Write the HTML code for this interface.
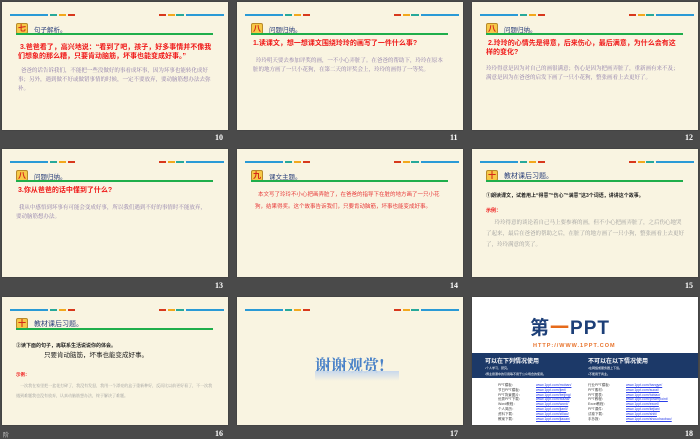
<!DOCTYPE html>
<html><head><meta charset="utf-8"><style>
*{margin:0;padding:0;box-sizing:border-box}
body{width:700px;height:438px;background:#4a4a4a;position:relative;overflow:hidden;font-family:"Liberation Sans","Noto Sans CJK SC",sans-serif}
.s{position:absolute;width:226px;height:128px;background:#f9f4e1;overflow:hidden;box-shadow:0 0 1px #333}
.n{position:absolute;color:#fff;font:bold 8px "Liberation Serif",serif}
.l{position:absolute;height:1.5px;top:12px}
.b{position:absolute;left:14px;top:21px;width:12px;height:11px;background:#f7c948;border:1px solid #b88a2a;border-radius:2px;color:#d42a1a;font-size:8px;font-weight:bold;line-height:9px;text-align:center}
.t{position:absolute;left:32px;top:22px;font-size:6.5px;color:#2a3f7a}
.g{position:absolute;left:14px;top:31px;width:197px;height:1.5px;background:#1fae4b}
.q{position:absolute;left:16px;color:#f01818;font-weight:bold;font-size:7px;line-height:8.5px;width:195px}
.p{position:absolute;left:16px;color:#8a78a8;font-family:"Noto Serif CJK SC",serif;font-size:5.5px;line-height:9px;width:195px}
</style></head><body>

<!-- template lines function via repeated markup -->
<div class="s" style="left:2px;top:2px">
<div class="l" style="left:8px;width:38px;background:#2a9ad6"></div><div class="l" style="left:48px;width:7px;background:#26a89a"></div><div class="l" style="left:57px;width:7px;background:#f2a81d"></div><div class="l" style="left:66px;width:7px;background:#d8381c"></div>
<div class="l" style="left:157px;width:7px;background:#d8381c"></div><div class="l" style="left:166px;width:7px;background:#f2a81d"></div><div class="l" style="left:174px;width:8px;background:#26a89a"></div><div class="l" style="left:184px;width:38px;background:#2a9ad6"></div>
<div class="b">七</div><div class="t">句子解析。</div><div class="g"></div>
<div class="q" style="top:42px;">&nbsp;3.爸爸看了，高兴地说：“看到了吧，孩子，好多事情并不像我们想象的那么糟，只要肯动脑筋，坏事也能变成好事。”</div>
<div class="p" style="top:64px">&nbsp;&nbsp;爸爸的话告诉我们，不能把一些没做好的事看成坏事，因为坏事也能转化成好事；另外，遇到做不好或做错事情的时候，一定不要放弃，要动脑筋想办法去弥补。</div>
</div>
<div class="n" style="left:215px;top:133px">10</div>

<div class="s" style="left:237px;top:2px">
<div class="l" style="left:8px;width:38px;background:#2a9ad6"></div><div class="l" style="left:48px;width:7px;background:#26a89a"></div><div class="l" style="left:57px;width:7px;background:#f2a81d"></div><div class="l" style="left:66px;width:7px;background:#d8381c"></div>
<div class="l" style="left:157px;width:7px;background:#d8381c"></div><div class="l" style="left:166px;width:7px;background:#f2a81d"></div><div class="l" style="left:174px;width:8px;background:#26a89a"></div><div class="l" style="left:184px;width:38px;background:#2a9ad6"></div>
<div class="b">八</div><div class="t">问题归纳。</div><div class="g"></div>
<div class="q" style="top:38px">1.读课文，想一想课文围绕玲玲的画写了一件什么事?</div>
<div class="p" style="top:54px">&nbsp;&nbsp;玲玲明天要去参加评奖的画，一不小心弄脏了。在爸爸的帮助下，玲玲在原本脏的地方画了一只小花狗，在第二天的评奖会上，玲玲的画得了一等奖。</div>
</div>
<div class="n" style="left:450px;top:133px">11</div>

<div class="s" style="left:472px;top:2px">
<div class="l" style="left:8px;width:38px;background:#2a9ad6"></div><div class="l" style="left:48px;width:7px;background:#26a89a"></div><div class="l" style="left:57px;width:7px;background:#f2a81d"></div><div class="l" style="left:66px;width:7px;background:#d8381c"></div>
<div class="l" style="left:157px;width:7px;background:#d8381c"></div><div class="l" style="left:166px;width:7px;background:#f2a81d"></div><div class="l" style="left:174px;width:8px;background:#26a89a"></div><div class="l" style="left:184px;width:38px;background:#2a9ad6"></div>
<div class="b">八</div><div class="t">问题归纳。</div><div class="g"></div>
<div class="q" style="top:38px;left:14px">&nbsp;2.玲玲的心情先是得意，后来伤心，最后满意，为什么会有这样的变化?</div>
<div class="p" style="top:62px;left:14px">玲玲得意是因为对自己的画很满意；伤心是因为把画弄脏了，重新画有来不及；满意是因为在爸爸的启发下画了一只小花狗，整张画看上去更好了。</div>
</div>
<div class="n" style="left:685px;top:133px">12</div>

<div class="s" style="left:2px;top:149px">
<div class="l" style="left:8px;width:38px;background:#2a9ad6"></div><div class="l" style="left:48px;width:7px;background:#26a89a"></div><div class="l" style="left:57px;width:7px;background:#f2a81d"></div><div class="l" style="left:66px;width:7px;background:#d8381c"></div>
<div class="l" style="left:157px;width:7px;background:#d8381c"></div><div class="l" style="left:166px;width:7px;background:#f2a81d"></div><div class="l" style="left:174px;width:8px;background:#26a89a"></div><div class="l" style="left:184px;width:38px;background:#2a9ad6"></div>
<div class="b">八</div><div class="t">问题归纳。</div><div class="g"></div>
<div class="q" style="top:38px">3.你从爸爸的话中懂到了什么?</div>
<div class="p" style="top:54px;left:14px">&nbsp;&nbsp;我从中感悟到坏事有可能会变成好事，所以我们遇到不好的事情时不能放弃，要动脑筋想办法。</div>
</div>
<div class="n" style="left:215px;top:281px">13</div>

<div class="s" style="left:237px;top:149px">
<div class="l" style="left:8px;width:38px;background:#2a9ad6"></div><div class="l" style="left:48px;width:7px;background:#26a89a"></div><div class="l" style="left:57px;width:7px;background:#f2a81d"></div><div class="l" style="left:66px;width:7px;background:#d8381c"></div>
<div class="l" style="left:157px;width:7px;background:#d8381c"></div><div class="l" style="left:166px;width:7px;background:#f2a81d"></div><div class="l" style="left:174px;width:8px;background:#26a89a"></div><div class="l" style="left:184px;width:38px;background:#2a9ad6"></div>
<div class="b">九</div><div class="t">课文主题。</div><div class="g"></div>
<div class="p" style="top:40px;left:18px;color:#e83a3a;font-family:'Liberation Sans','Noto Sans CJK SC',sans-serif;line-height:12px;width:192px">&nbsp;&nbsp;本文写了玲玲不小心把画弄脏了，在爸爸的指导下在脏的地方画了一只小花狗，结果得奖。这个故事告诉我们，只要肯动脑筋，坏事也能变成好事。</div>
</div>
<div class="n" style="left:450px;top:281px">14</div>

<div class="s" style="left:472px;top:149px">
<div class="l" style="left:8px;width:38px;background:#2a9ad6"></div><div class="l" style="left:48px;width:7px;background:#26a89a"></div><div class="l" style="left:57px;width:7px;background:#f2a81d"></div><div class="l" style="left:66px;width:7px;background:#d8381c"></div>
<div class="l" style="left:157px;width:7px;background:#d8381c"></div><div class="l" style="left:166px;width:7px;background:#f2a81d"></div><div class="l" style="left:174px;width:8px;background:#26a89a"></div><div class="l" style="left:184px;width:38px;background:#2a9ad6"></div>
<div class="b">十</div><div class="t" style="font-size:7px">教材课后习题。</div><div class="g"></div>
<div class="q" style="top:43px;left:14px;color:#222;font-size:5px">①朗读课文，试着用上“得意”“伤心”“满意”这3个词语，讲讲这个故事。</div>
<div class="q" style="top:58px;left:14px;font-size:5px">示例：</div>
<div class="p" style="top:68px;left:14px;color:#999;line-height:11px;width:200px">&nbsp;&nbsp;&nbsp;&nbsp;&nbsp;&nbsp;玲玲得意的谈论着自己马上要参赛的画，但不小心把画弄脏了，之后伤心地哭了起来，最后在爸爸的帮助之后，在脏了的地方画了一只小狗，整张画看上去更好了，玲玲满意的笑了。</div>
</div>
<div class="n" style="left:685px;top:281px">15</div>

<div class="s" style="left:2px;top:297px">
<div class="l" style="left:8px;width:38px;background:#2a9ad6"></div><div class="l" style="left:48px;width:7px;background:#26a89a"></div><div class="l" style="left:57px;width:7px;background:#f2a81d"></div><div class="l" style="left:66px;width:7px;background:#d8381c"></div>
<div class="l" style="left:157px;width:7px;background:#d8381c"></div><div class="l" style="left:166px;width:7px;background:#f2a81d"></div><div class="l" style="left:174px;width:8px;background:#26a89a"></div><div class="l" style="left:184px;width:38px;background:#2a9ad6"></div>
<div class="b">十</div><div class="t" style="font-size:7px">教材课后习题。</div><div class="g"></div>
<div class="q" style="top:45px;left:14px;color:#222;font-size:5px">②读下面的句子，再联系生活说说你的体会。</div>
<div class="q" style="top:55px;left:42px;color:#222;font-weight:normal;font-size:6.5px">只要肯动脑筋，坏事也能变成好事。</div>
<div class="q" style="top:74px;left:14px;font-size:4.5px">示例：</div>
<div class="p" style="top:84px;left:14px;color:#999;font-size:4px;line-height:10px;width:200px">&nbsp;&nbsp;&nbsp;&nbsp;一次我在家里把一盆花打碎了，我没有发怒，我用一个漂亮的盒子重新种好，反而比以前更好看了，不一次我遇到难题我也没有放弃，认真动脑筋想办法，终于解决了难题。</div>
</div>
<div class="n" style="left:215px;top:429px">16</div>
<div class="n" style="left:3px;top:430px;font-weight:normal;color:#ccc;font-size:6px">阶</div>

<div class="s" style="left:237px;top:297px">
<div class="l" style="left:8px;width:38px;background:#2a9ad6"></div><div class="l" style="left:48px;width:7px;background:#26a89a"></div><div class="l" style="left:57px;width:7px;background:#f2a81d"></div><div class="l" style="left:66px;width:7px;background:#d8381c"></div>
<div class="l" style="left:157px;width:7px;background:#d8381c"></div><div class="l" style="left:166px;width:7px;background:#f2a81d"></div><div class="l" style="left:174px;width:8px;background:#26a89a"></div><div class="l" style="left:184px;width:38px;background:#2a9ad6"></div>
<div style="position:absolute;left:78px;top:56px;font-size:16px;font-weight:bold;color:#4a82c8;font-family:'Noto Serif CJK SC',serif;letter-spacing:0">谢谢观赏!</div>
<div style="position:absolute;left:78px;top:74px;width:84px;height:10px;background:linear-gradient(#c8d8ec,rgba(249,244,225,0))"></div>
</div>
<div class="n" style="left:450px;top:429px">17</div>

<div class="s" style="left:472px;top:297px;background:#fff">
<div style="position:absolute;left:58px;top:22px;font-size:19px;font-weight:bold;color:#1d3f78;letter-spacing:1px;line-height:20px">第<span style="color:#e66a1a">一</span>PPT</div>
<div style="position:absolute;left:61px;top:46px;font-size:5.5px;color:#e8722a;letter-spacing:1px;font-weight:bold">HTTP://WWW.1PPT.COM</div>
<div style="position:absolute;left:0;top:56px;width:226px;height:25px;background:#1c3968;color:#fff">
<div style="position:absolute;left:13px;top:3px;font-size:6px;font-weight:bold">可以在下列情况使用</div>
<div style="position:absolute;left:116px;top:3px;font-size:6px;font-weight:bold">不可以在以下情况使用</div>
<div style="position:absolute;left:13px;top:12px;font-size:3px;line-height:6px">•个人学习、研究。<br>•博主授课中的引用等不用于公众场合的使用。</div>
<div style="position:absolute;left:116px;top:12px;font-size:3px;line-height:6px">•在网络或服务器上下载。<br>•不能用于商业。</div>
</div>
<div style="position:absolute;left:26px;top:86px;font-size:3.5px;line-height:4.8px;color:#444">PPT模板：<br>节日PPT模板：<br>PPT背景图片：<br>优秀PPT下载：<br>Word教程：<br>个人简历：<br>资料下载：<br>教案下载：</div>
<div style="position:absolute;left:64px;top:86px;font-size:3.5px;line-height:4.8px;color:#2a3ee8;text-decoration:underline">www.1ppt.com/moban/<br>www.1ppt.com/jieri/<br>www.1ppt.com/beijing/<br>www.1ppt.com/xiazai/<br>www.1ppt.com/word/<br>www.1ppt.com/jianli/<br>www.1ppt.com/ziliao/<br>www.1ppt.com/jiaoan/</div>
<div style="position:absolute;left:116px;top:86px;font-size:3.5px;line-height:4.8px;color:#444">行业PPT模板：<br>PPT素材：<br>PPT图表：<br>PPT教程：<br>Excel教程：<br>PPT课件：<br>试卷下载：<br>手抄报：</div>
<div style="position:absolute;left:154px;top:86px;font-size:3.5px;line-height:4.8px;color:#2a3ee8;text-decoration:underline">www.1ppt.com/hangye/<br>www.1ppt.com/sucai/<br>www.1ppt.com/tubiao/<br>www.1ppt.com/powerpoint/<br>www.1ppt.com/excel/<br>www.1ppt.com/kejian/<br>www.1ppt.com/shiti/<br>www.1ppt.com/shouchaobao/</div>
</div>
<div class="n" style="left:685px;top:429px">18</div>

</body></html>
